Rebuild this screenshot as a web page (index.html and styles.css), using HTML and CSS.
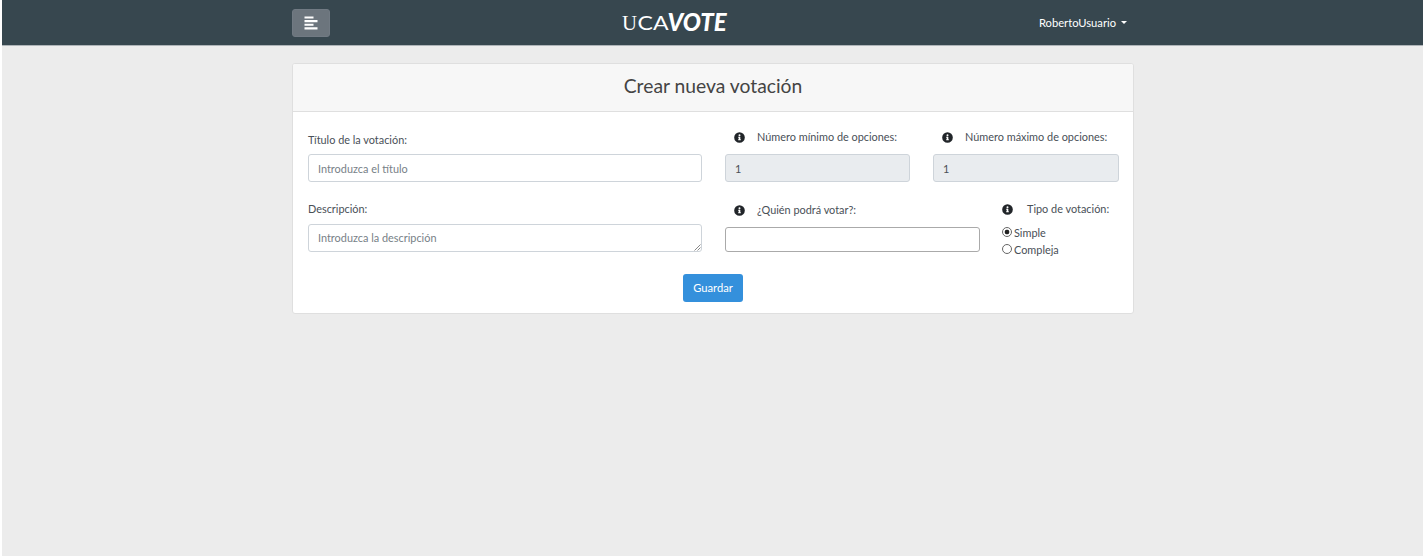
FILE: index.html
```html
<!DOCTYPE html>
<html lang="es">
<head>
<meta charset="utf-8">
<title>UCAVOTE</title>
<link rel="stylesheet" href="styles.css">
</head>
<body>
<svg class="defs" width="0" height="0">
  <symbol id="info" viewBox="0 0 512 512"><path fill="currentColor" fill-rule="evenodd" d="M256 8a248 248 0 1 0 0 496 248 248 0 0 0 0-496zm0 100a46 46 0 1 1 0 92 46 46 0 0 1 0-92zm62 264c0 7-5 12-12 12h-100c-7 0-12-5-12-12v-24c0-7 5-12 12-12h12v-64h-12c-7 0-12-5-12-12v-24c0-7 5-12 12-12h76c7 0 12 5 12 12v100h12c7 0 12 5 12 12z"/></symbol>
</svg>
<div class="page">
  <header class="navbar">
    <div class="navbar-inner">
      <button class="menu-button" aria-label="Menú">
        <svg width="14" height="14" viewBox="0 0 14 14"><path fill="#fff" d="M.5 .5h9v2h-9zM.5 4h13v2.2h-13zM.5 7.8h9v2h-9zM.5 11.3h13v2.2h-13z"/></svg>
      </button>
      <svg class="logo" width="112" height="36" viewBox="0 0 112 36" fill="#fff">
        <text class="logo-serif" x="2" y="25" textLength="15" lengthAdjust="spacingAndGlyphs">U</text>
        <text class="logo-sans" x="17.5" y="25.2" textLength="31" lengthAdjust="spacingAndGlyphs">CA</text>
        <text class="logo-brush" x="47.5" y="25.5" textLength="59" lengthAdjust="spacingAndGlyphs">VOTE</text>
      </svg>
      <div class="user">RobertoUsuario<span class="caret"></span></div>
    </div>
  </header>
  <main class="card">
    <h1 class="card-title">Crear nueva votación</h1>
    <form class="card-body">
      <div class="fields">
        <div class="field title-field">
          <label for="titulo">Título de la votación:</label>
          <input class="control" id="titulo" placeholder="Introduzca el título">
        </div>
        <div class="limits">
          <div class="field">
            <label class="with-info" for="minimo"><svg class="info"><use href="#info"/></svg>Número mínimo de opciones:</label>
            <input class="control" id="minimo" value="1" disabled>
          </div>
          <div class="field">
            <label class="with-info" for="maximo"><svg class="info"><use href="#info"/></svg>Número máximo de opciones:</label>
            <input class="control" id="maximo" value="1" disabled>
          </div>
        </div>
        <div class="field description-field">
          <label for="descripcion">Descripción:</label>
          <div class="textarea-wrap">
            <textarea class="control" id="descripcion" placeholder="Introduzca la descripción"></textarea>
            <svg class="grip" width="7" height="7" viewBox="0 0 7 7"><path d="M.5 6.5l6-6M3.5 6.5l3-3" stroke="#888" fill="none"/></svg>
          </div>
        </div>
        <div class="voting">
          <div class="field voters">
            <label class="with-info" for="votantes"><svg class="info"><use href="#info"/></svg>¿Quién podrá votar?:</label>
            <input class="select-box" id="votantes">
          </div>
          <div class="type">
            <div class="type-label"><svg class="info"><use href="#info"/></svg>Tipo de votación:</div>
            <label class="option"><input type="radio" name="tipo" checked>Simple</label>
            <label class="option"><input type="radio" name="tipo">Compleja</label>
          </div>
        </div>
      </div>
      <button class="save" type="button">Guardar</button>
    </form>
  </main>
</div>
</body>
</html>
```
FILE: styles.css
```css
* { box-sizing: border-box; }
body { margin: 0; background: #fff; font: 10.9px/16px Lato, sans-serif; color: #495057; }
.defs { display: block; height: 0; }
.page { margin-left: 2px; height: 556px; background: #ececec; }
.navbar { height: 46px; background: #37474f; border-bottom: 1px solid #aeb4b8; }
.navbar-inner { width: 842px; height: 45px; margin-left: 290px; display: grid; grid-template-columns: 328px 112px 1fr; align-items: center; }
.menu-button { width: 38px; height: 28px; padding: 0; border: 1px solid #717a83; border-radius: 3px; background: #6c757d; display: flex; align-items: center; justify-content: center; }
.logo { display: block; }
.logo-serif { font: 22px "Liberation Serif", serif; }
.logo-sans { font: 20px Lato, sans-serif; }
.logo-brush { font: italic 900 24px Lato, sans-serif; }
.user { justify-self: end; display: flex; align-items: center; gap: 5px; margin-right: 7px; color: #fff; font-size: 11.2px; }
.caret { border: 3px solid transparent; border-top-color: #fff; border-bottom: 0; }
.card { width: 842px; height: 251px; margin: 17px 0 0 290px; background: #fff; border: 1px solid #dfdfdf; border-radius: 3px; }
.card-title { margin: 0; height: 48px; padding-top: 10px; border-bottom: 1px solid #dfdfdf; background: #f7f7f7; border-radius: 2px 2px 0 0; font-size: 19.3px; line-height: 24px; font-weight: 400; text-align: center; color: #444; }
.card-body { padding: 17px 15px 0; display: flex; flex-direction: column; }
.fields { display: grid; grid-template-columns: 394px 394px; column-gap: 23px; grid-template-rows: 73px 72px; }
.field { display: flex; flex-direction: column; }
.title-field { padding-top: 3px; gap: 6px; }
.limits { display: grid; grid-template-columns: 185px 186px; column-gap: 23px; }
.limits .field { gap: 9px; }
.with-info { display: flex; align-items: center; gap: 12px; padding-left: 9px; }
.info { width: 11px; height: 11px; flex: none; color: #212529; }
.control { width: 100%; height: 28px; padding: 0 9px; border: 1px solid #ced4da; border-radius: 3px; background: #fff; font: inherit; color: #495057; }
.control::placeholder { color: #777f87; opacity: 1; }
.control:disabled { background: #e9ecef; color: #495057; }
.textarea-wrap { position: relative; }
.grip { position: absolute; right: 1px; bottom: 1px; }
textarea.control { display: block; padding-top: 5px; resize: none; overflow: hidden; }
.description-field { gap: 6px; }
.description-field label { margin-top: -1px; margin-bottom: 1px; }
.voting { display: grid; grid-template-columns: 255px 1fr; column-gap: 22px; }
.voters { gap: 9px; }
.select-box { width: 100%; height: 25px; border: 1px solid #aaa; border-radius: 3px; font: inherit; }
.type { margin-top: -1px; }
.type-label { display: flex; align-items: center; gap: 14px; margin-bottom: 7px; }
.option { display: flex; align-items: center; gap: 2px; height: 17.5px; }
.option input { appearance: none; width: 10px; height: 10px; margin: -2px 0 0; border: 1px solid #666; border-radius: 50%; }
.option input:checked { background: radial-gradient(circle, #222 0 2px, #fff 2.7px); }
.save { align-self: center; width: 60px; height: 28px; padding: 0 0 1px; border: 0; border-radius: 3px; background: #3490dc; color: #fff; font: 11.2px Lato, sans-serif; }
```
